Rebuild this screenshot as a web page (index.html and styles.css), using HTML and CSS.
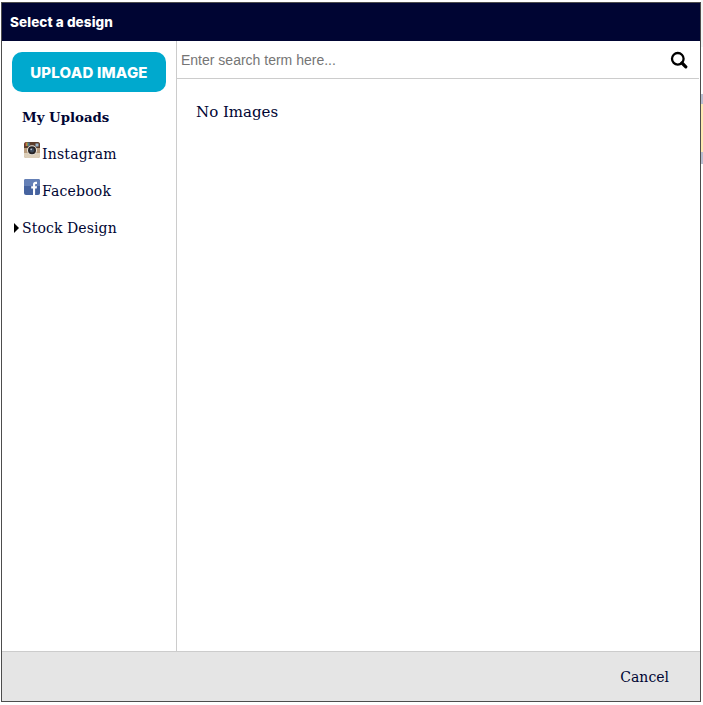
FILE: index.html
```html
<!DOCTYPE html>
<html lang="en">
<head>
<meta charset="utf-8">
<title>Select a design</title>
<link rel="stylesheet" href="styles.css">
</head>
<body>
<div class="backdrop">
  <span class="peek peek-top"></span>
  <span class="peek peek-banner"></span>
  <div class="modal">
    <header class="modal-head">Select a design</header>
    <div class="modal-body">
      <nav class="side">
        <button class="upload">UPLOAD IMAGE</button>
        <ul class="menu">
          <li class="item item-active">My Uploads</li>
          <li class="item item-icon">
            <svg class="ico" viewBox="0 0 16 16" width="16" height="16">
              <rect x="0" y="0" width="16" height="16" rx="2.5" fill="#b89c7e"/>
              <path d="M0 6V2.5A2.5 2.5 0 0 1 2.5 0H13.5A2.5 2.5 0 0 1 16 2.500V6Z" fill="#5a3d2c"/>
              <rect x="1.500" y="0.500" width="1" height="3.500" fill="#d94f4f"/>
              <rect x="2.500" y="0.500" width="1" height="3.500" fill="#e6c34a"/>
              <rect x="3.500" y="0.500" width="1" height="3.500" fill="#5aa36a"/>
              <rect x="4.500" y="0.500" width="1" height="3.500" fill="#4a7fc0"/>
              <rect x="11.500" y="1.500" width="3" height="3" fill="#9dbad0"/>
              <path d="M0 11H16V13.500A2.500 2.500 0 0 1 13.500 16H2.500A2.500 2.500 0 0 1 0 13.500Z" fill="#dccfba"/>
              <circle cx="8" cy="8.300" r="5" fill="#e8e4dc"/>
              <circle cx="8" cy="8.300" r="4" fill="#262426"/>
              <circle cx="8" cy="8.300" r="2.200" fill="#3d4a5c"/>
              <circle cx="7.200" cy="7.400" r="0.800" fill="#b9c6d6"/>
            </svg>Instagram
          </li>
          <li class="item item-icon">
            <svg class="ico" viewBox="0 0 16 16" width="16" height="16">
              <rect x="0" y="0" width="16" height="16" rx="2" fill="#46639f"/>
              <path d="M0 7V2A2 2 0 0 1 2 0H14A2 2 0 0 1 16 2V7Z" fill="#6580b6"/>
              <path d="M9 16V9.500H7.200V7.200H9V5.600C9 3.800 10 2.800 11.700 2.800H13V5H12C11.300 5 11.100 5.300 11.100 5.900V7.200H13L12.700 9.500H11.100V16Z" fill="#fff"/>
            </svg>Facebook
          </li>
          <li class="item item-tree"><span class="caret"></span>Stock Design</li>
        </ul>
      </nav>
      <main class="content">
        <div class="search">
          <input class="search-input" type="text" placeholder="Enter search term here...">
          <svg class="search-ico" viewBox="0 0 18 18" width="18" height="18">
            <circle cx="7.800" cy="7.800" r="5.800" fill="none" stroke="#000" stroke-width="2.300"/>
            <path d="M12 12L15.800 15.800" stroke="#000" stroke-width="3.200" stroke-linecap="round"/>
          </svg>
        </div>
        <p class="empty">No Images</p>
      </main>
    </div>
    <footer class="modal-foot"><span class="cancel">Cancel</span></footer>
  </div>
</div>
</body>
</html>
```
FILE: styles.css
```css
* { box-sizing: border-box; }
html, body { margin: 0; height: 705px; overflow: hidden; background: #fff; }
.backdrop { position: relative; padding: 2px 2px 3px 1px; height: 705px; }
.peek { position: absolute; right: 0; width: 2px; }
.peek-top { top: 0; height: 47px; background: #f5f5f5; }
.peek-banner {
  top: 94px;
  height: 70px;
  background: linear-gradient(#b9bdd0 0 10px, #ffe9b3 10px 58px, #b9bdd0 58px);
}
.modal {
  position: relative;
  height: 700px;
  border: 1px solid #4d4d4d;
  display: flex;
  flex-direction: column;
  font-family: "DejaVu Serif", serif;
  color: #000533;
  background: #fff;
}
.modal-head {
  height: 38px;
  flex: none;
  background: #000533;
  color: #fff;
  font: 800 13.500px/38px Inter, sans-serif;
  letter-spacing: 0.1px;
  padding-left: 8px;
}
.modal-body { flex: 1; display: flex; min-height: 0; }
.side { width: 175px; flex: none; border-right: 1px solid #ccc; padding: 11px 10px 0; }
.upload {
  display: block;
  width: 154px;
  height: 40px;
  border: 0;
  border-radius: 10px;
  background: #00a9ce;
  color: #fff;
  font: 800 15px Inter, sans-serif;
  letter-spacing: 0.2px;
  padding: 0;
}
.menu { list-style: none; margin: 7px 0 0; padding: 0; font-size: 14px; letter-spacing: 0.2px; }
.item { height: 37px; line-height: 37px; padding-left: 10px; white-space: nowrap; }
.item-active { font-weight: 700; font-size: 13.300px; letter-spacing: 0; }
.item-icon { padding-left: 12px; }
.ico { vertical-align: 1px; margin-right: 2px; }
.item-tree { position: relative; letter-spacing: 0.1px; }
.caret {
  position: absolute;
  left: 2px;
  top: 13px;
  border-left: 5px solid #000;
  border-top: 5px solid transparent;
  border-bottom: 5px solid transparent;
}
.content { flex: 1; min-width: 0; }
.search {
  height: 38px;
  border-bottom: 1px solid #ccc;
  margin-right: 1px;
  display: flex;
  align-items: center;
  padding: 0 11px 0 4px;
}
.search-input {
  flex: 1;
  border: 0;
  outline: 0;
  padding: 0;
  font: 14px "Liberation Sans", sans-serif;
  color: #333;
}
.search-input::placeholder { color: #757575; opacity: 1; }
.search-ico { flex: none; }
.empty { margin: 24px 0 0 19px; font-size: 15px; line-height: 18px; }
.modal-foot {
  height: 50px;
  flex: none;
  background: #e5e5e5;
  border-top: 1px solid #ccc;
  display: flex;
  justify-content: flex-end;
  align-items: center;
  padding-right: 31px;
  font-size: 14px;
}
```
